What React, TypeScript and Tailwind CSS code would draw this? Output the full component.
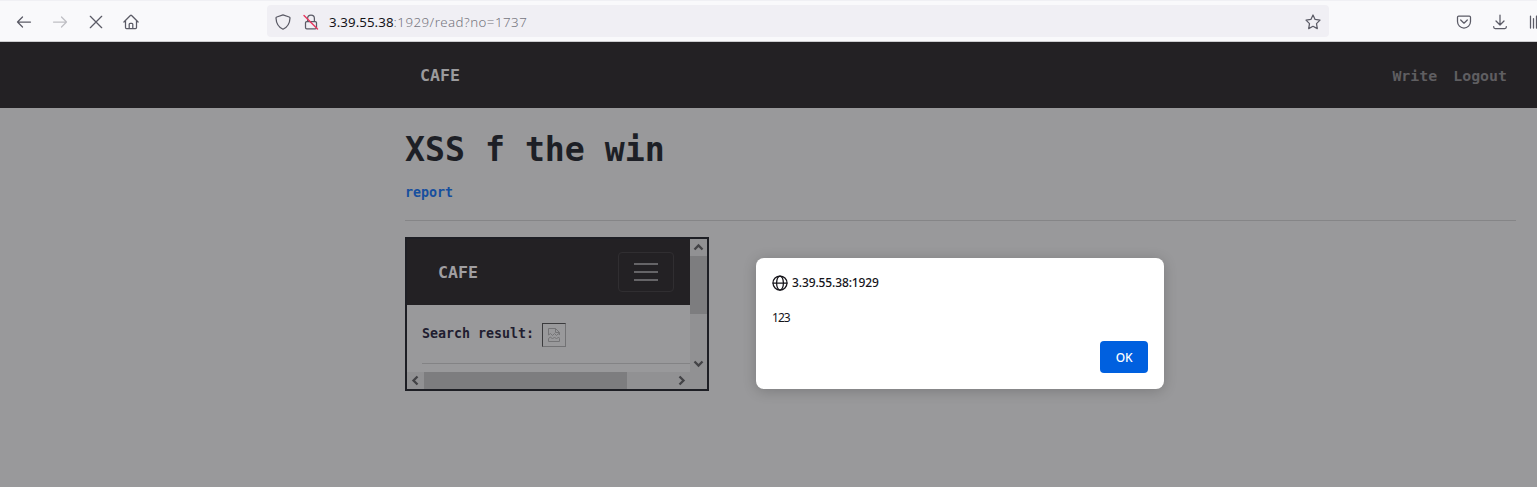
import React from "react";

type IconProps = { className?: string; children: React.ReactNode };

function Icon({ className = "", children }: IconProps) {
  return (
    <svg
      viewBox="0 0 16 16"
      fill="none"
      stroke="currentColor"
      strokeWidth="1.25"
      strokeLinecap="round"
      strokeLinejoin="round"
      className={`block h-4 w-4 shrink-0 ${className}`}
    >
      {children}
    </svg>
  );
}

function Toolbar() {
  return (
    <header className="flex h-[42px] w-full shrink-0 items-center overflow-hidden border-t border-b border-t-[#f0f0f4] border-b-[#cccccf] bg-[#f9f9fb] text-[#5b5b66]">
      <div className="flex w-[267px] shrink-0 items-center gap-5 pt-px pl-4">
        <Icon>
          <path d="M14.500 8H1.500M6.500 3 1.500 8l5 5" />
        </Icon>
        <Icon className="text-[#bfbfc4]">
          <path d="M1.500 8h13M9.500 3l5 5-5 5" />
        </Icon>
        <Icon>
          <path d="m2.300 2.300 11.400 11.400M13.700 2.300 2.300 13.700" />
        </Icon>
        <Icon className="-ml-px">
          <path d="M.9 8 7.400 1.500q.6-.6 1.200 0L15.100 8M2.500 7v6.500q0 1 1 1h9q1 0 1-1V7M6.200 14.300v-4q0-.9.9-.9h1.800q.9 0 .9.9v4" />
        </Icon>
      </div>
      <div className="flex h-8 w-[1062px] shrink-0 items-center rounded bg-[#f0eff4] pt-px pr-2 pl-2">
        <Icon>
          <path d="M8 .9 14.200 3c.6.2.8.5.8 1-.2 5.200-2 9-7 11.200C3 13 1.200 9.200 1 4c0-.5.2-.8.8-1Z" />
        </Icon>
        <Icon className="ml-3">
          <rect x="2.500" y="7.500" width="11" height="7.300" rx="1.300" />
          <path d="M4.600 7.300V4.500a3.400 3.400 0 0 1 6.800 0v2.800" />
          <path d="m1 1.500 13.500 13.500" stroke="#e8375f" strokeWidth="1.400" />
        </Icon>
        <div className="ml-2.5 flex-1 font-['Noto_Sans',sans-serif] text-[13.3px] leading-5 font-light tracking-[0.036em] text-[#75757e]">
          <span className="font-normal tracking-[0.005em] text-[#15141a]">3.39.55.38</span>:1929/read?no=1737
        </div>
        <Icon>
          <path d="m8 1 2.100 4.400 4.900.7-3.500 3.500.8 5L8 12.300l-4.300 2.300.8-5L1 6.100l4.900-.7Z" />
        </Icon>
      </div>
      <div className="flex w-[208px] shrink-0 items-center gap-5 pt-px pl-[127px]">
        <Icon>
          <path d="M2.700 2h10.600q1.200 0 1.200 1.200v4.300a6.500 6.500 0 0 1-13 0V3.200Q1.500 2 2.700 2ZM4.700 6 8 9.200 11.300 6" />
        </Icon>
        <Icon>
          <path d="M8 1v10M4 7l4 4 4-4M1.700 12.500V13q0 1.500 1.500 1.500h9.600q1.500 0 1.500-1.500v-.5" />
        </Icon>
        <Icon className="ml-px">
          <path d="M1.500 2v12M4.500 4.500V14M7.500 2v12M10 2l4 12" />
        </Icon>
      </div>
    </header>
  );
}

function ScrollArrow({ d }: { d: string }) {
  return (
    <svg viewBox="0 0 17 17" className="block h-[17px] w-[17px] shrink-0" fill="none" stroke="#434346" strokeWidth="2.300">
      <path d={d} />
    </svg>
  );
}

function EmbeddedPage() {
  return (
    <section className="mt-4 flex h-[154px] w-[304px] flex-col border-2 border-[#1d1e24] bg-[#99999b]">
      <div className="flex h-[133px]">
        <div className="w-[283px] overflow-hidden">
          <div className="flex h-[66px] items-center justify-between bg-[#232124] pr-4 pl-[31px]">
            <span className="pt-0.5 text-[16.6px] leading-6 text-[#a09fa2]">CAFE</span>
            <div className="flex h-10 w-14 flex-col items-center justify-center gap-1.5 rounded border border-[#302e31]">
              <i className="h-0.5 w-6 bg-[#656467]" />
              <i className="h-0.5 w-6 bg-[#656467]" />
              <i className="h-0.5 w-6 bg-[#656467]" />
            </div>
          </div>
          <div className="flex h-[58px] items-center pl-[15px] text-[13.3px] text-[#211d30]">
            <span className="w-[120px] whitespace-pre">Search result: </span>
            <span className="mt-0.5 flex h-6 w-6 items-center justify-center border border-t-[#3b3b3d] border-r-[#727274] border-b-[#727274] border-l-[#3b3b3d]">
              <svg viewBox="0 0 14 16" className="h-4 w-3.5" fill="none" stroke="#747476">
                <path d="M1.500 8V1.500h7l4 4V8M8.500 1.500v4h4M1.500 8l2-1.500 2 2 2-2 2 2 2-2 1 1.500M1.500 14.500v-3l2-1.500 2 2 2-2 2 2 2-2 1 1.500v3Z" />
              </svg>
            </span>
          </div>
          <div className="ml-[15px] h-px bg-[#838385]" />
        </div>
        <div className="flex w-[17px] flex-col bg-[#919193]">
          <ScrollArrow d="m4.500 10.500 4-4 4 4" />
          <div className="h-[58px] bg-[#7d7d7f]" />
          <div className="flex-1" />
          <ScrollArrow d="m4.500 6.500 4 4 4-4" />
        </div>
      </div>
      <div className="flex h-[17px] bg-[#919193]">
        <ScrollArrow d="m10.500 4.500-4 4 4 4" />
        <div className="w-[203px] bg-[#7d7d7f]" />
        <div className="w-[46px]" />
        <ScrollArrow d="m6.500 4.500 4 4-4 4" />
      </div>
    </section>
  );
}

function AlertDialog() {
  return (
    <div
      role="alertdialog"
      className="absolute top-[258px] left-[756px] flex h-[131px] w-[408px] flex-col rounded-lg bg-white p-4 font-['Noto_Sans',sans-serif] text-xs text-[#15141a] shadow-[0_2px_14px_rgba(0,0,0,0.2)]"
    >
      <div className="flex h-[17px] items-center gap-1 font-medium">
        <Icon className="text-[#15141a]">
          <circle cx="8" cy="8" r="7" />
          <ellipse cx="8" cy="8" rx="3.400" ry="7" />
          <path d="M1 8h14" />
        </Icon>
        <span className="tracking-[-0.01em]">3.39.55.38:1929</span>
      </div>
      <p className="mt-[18px] h-[17px] leading-[17px] tracking-[-0.08em]">123</p>
      <button className="mt-[15px] h-8 w-12 self-end rounded bg-[#0060df] pt-px font-medium tracking-[-0.03em] text-white">OK</button>
    </div>
  );
}

export default function App() {
  return (
    <div className="relative flex h-[487px] w-full flex-col overflow-hidden bg-[#99999b]">
      <Toolbar />
      <div className="flex flex-1 flex-col font-['DejaVu_Sans_Mono',monospace] font-bold">
        <nav className="flex h-[66px] items-center justify-between bg-[#232124] pt-0.5 pr-[30px] pl-[420px]">
          <span className="text-[16.6px] leading-6 text-[#9b9b9d]">CAFE</span>
          <div className="flex gap-4 text-[14.9px] text-[#5f5e61]">
            <span>Write</span>
            <span>Logout</span>
          </div>
        </nav>
        <main className="pr-[21px] pl-[405px]">
          <h1 className="mt-[22px] h-10 text-[33.2px] leading-10 text-[#1d1f26]">XSS f the win</h1>
          <p className="mt-[13px] h-5 text-[13.3px] leading-5 text-[#174f9e]">report</p>
          <hr className="mt-[17px] border-t border-[#858587]" />
          <EmbeddedPage />
        </main>
      </div>
      <AlertDialog />
    </div>
  );
}
